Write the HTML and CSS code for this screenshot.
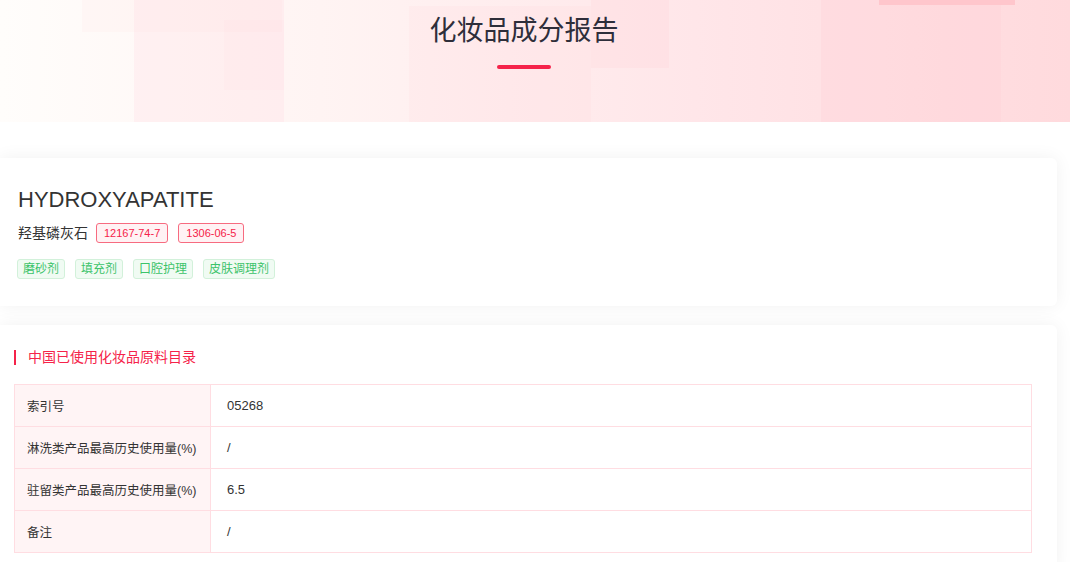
FILE: index.html
```html
<!DOCTYPE html>
<html lang="zh-CN">
<head>
  <meta charset="UTF-8">
  <meta name="viewport" content="width=device-width, initial-scale=1.0">
  <title>化妆品成分报告</title>
  <link rel="stylesheet" href="styles.css">
</head>
<body>

  <header class="banner">
    <span class="deco deco-a"></span>
    <span class="deco deco-b"></span>
    <span class="deco deco-c"></span>
    <span class="deco deco-d"></span>
    <span class="deco deco-e"></span>
    <span class="deco deco-f"></span>
    <span class="deco deco-g"></span>
    <h1 class="banner-title">化妆品成分报告</h1>
    <div class="banner-line"></div>
  </header>

  <main class="content">
    <section class="card card-info">
      <h2 class="ing-name">HYDROXYAPATITE</h2>
      <div class="ing-cn">
        <span>羟基磷灰石</span>
        <span class="cas">12167-74-7</span>
        <span class="cas">1306-06-5</span>
      </div>
      <div class="ing-tags">
        <span class="func">磨砂剂</span>
        <span class="func">填充剂</span>
        <span class="func">口腔护理</span>
        <span class="func">皮肤调理剂</span>
      </div>
    </section>

    <section class="card card-table">
      <h3 class="section-title">中国已使用化妆品原料目录</h3>
      <table class="info-table">
        <tr>
          <th>索引号</th>
          <td>05268</td>
        </tr>
        <tr>
          <th>淋洗类产品最高历史使用量(%)</th>
          <td>/</td>
        </tr>
        <tr>
          <th>驻留类产品最高历史使用量(%)</th>
          <td>6.5</td>
        </tr>
        <tr>
          <th>备注</th>
          <td>/</td>
        </tr>
      </table>
    </section>
  </main>

</body>
</html>
```

FILE: styles.css
```css
body {
  margin: 0;
  font-family: "Liberation Sans", "Noto Sans CJK SC", sans-serif;
  color: #333;
  background-color: #fff;
}

/* top banner */
.banner {
  position: relative;
  height: 122px;
  padding: 13px 22px 0 0;
  box-sizing: border-box;
  text-align: center;
  overflow: hidden;
  background: linear-gradient(90deg, #fffdfb 0%, #fff4f3 30%, #ffe6e9 65%, #ffdadd 100%);
}

.deco {
  position: absolute;
  display: block;
}

.deco-a { left: 82px; top: 0; width: 200px; height: 32px; background: rgba(255, 225, 225, 0.18); }
.deco-b { left: 134px; top: 0; width: 150px; height: 122px; background: rgba(255, 215, 222, 0.25); }
.deco-c { left: 224px; top: 20px; width: 60px; height: 70px; background: rgba(255, 215, 222, 0.12); }
.deco-d { left: 409px; top: 6px; width: 182px; height: 116px; background: rgba(255, 210, 218, 0.15); }
.deco-e { left: 591px; top: 0; width: 78px; height: 68px; background: rgba(255, 205, 212, 0.2); }
.deco-f { left: 821px; top: 0; width: 180px; height: 122px; background: rgba(255, 205, 210, 0.25); }
.deco-g { left: 879px; top: 0; width: 136px; height: 5px; background: #ffc6cc; }

.banner-title {
  position: relative;
  margin: 0;
  font-size: 27px;
  font-weight: normal;
  line-height: 37px;
  color: #2e2e3a;
}

.banner-line {
  position: relative;
  width: 54px;
  height: 4px;
  margin: 15px auto 0;
  border-radius: 2px;
  background-color: #f5234a;
}

/* cards */
.content {
  padding: 36px 13px 0 0;
}

.card {
  background-color: #fff;
  border-radius: 0 6px 6px 0;
  box-shadow: 0 0 18px rgba(0, 0, 0, 0.06);
}

.card + .card {
  margin-top: 19px;
}

.card-info {
  padding: 28px 18px 27px;
}

.ing-name {
  margin: 0;
  font-size: 22px;
  font-weight: normal;
  line-height: 28px;
  color: #333;
}

.ing-cn {
  display: flex;
  align-items: center;
  margin-top: 9px;
  font-size: 14px;
  line-height: 20px;
}

.cas {
  margin-left: 8px;
  padding: 0 7px;
  height: 20px;
  line-height: 18px;
  box-sizing: border-box;
  font-size: 11px;
  color: #f5234a;
  background-color: #fff2f4;
  border: 1px solid #f76b80;
  border-radius: 3px;
}

.cas + .cas {
  margin-left: 10px;
}

.ing-tags {
  display: flex;
  gap: 10px;
  margin-top: 16px;
  margin-left: -1px;
}

.func {
  height: 20px;
  line-height: 18px;
  padding: 0 5px;
  box-sizing: border-box;
  font-size: 12px;
  color: #3cc36a;
  background-color: #f0fbf3;
  border: 1px solid #d2f1da;
  border-radius: 3px;
}

.card-table {
  padding: 25px 25px 20px 14px;
}

.section-title {
  margin: 0;
  padding-left: 12px;
  border-left: 2px solid #f5234a;
  font-size: 14px;
  font-weight: normal;
  line-height: 15px;
  color: #f5234a;
}

.info-table {
  width: 100%;
  margin-top: 19px;
  border-collapse: collapse;
  table-layout: fixed;
  font-size: 13px;
}

.info-table th,
.info-table td {
  height: 41px;
  padding: 0 16px;
  border: 1px solid #ffdde2;
  text-align: left;
  font-weight: normal;
  color: #333;
  white-space: nowrap;
}

.info-table th {
  width: 196px;
  padding: 0 4px 0 12px;
  box-sizing: border-box;
  font-size: 12.5px;
  background-color: #fff4f5;
}
```
